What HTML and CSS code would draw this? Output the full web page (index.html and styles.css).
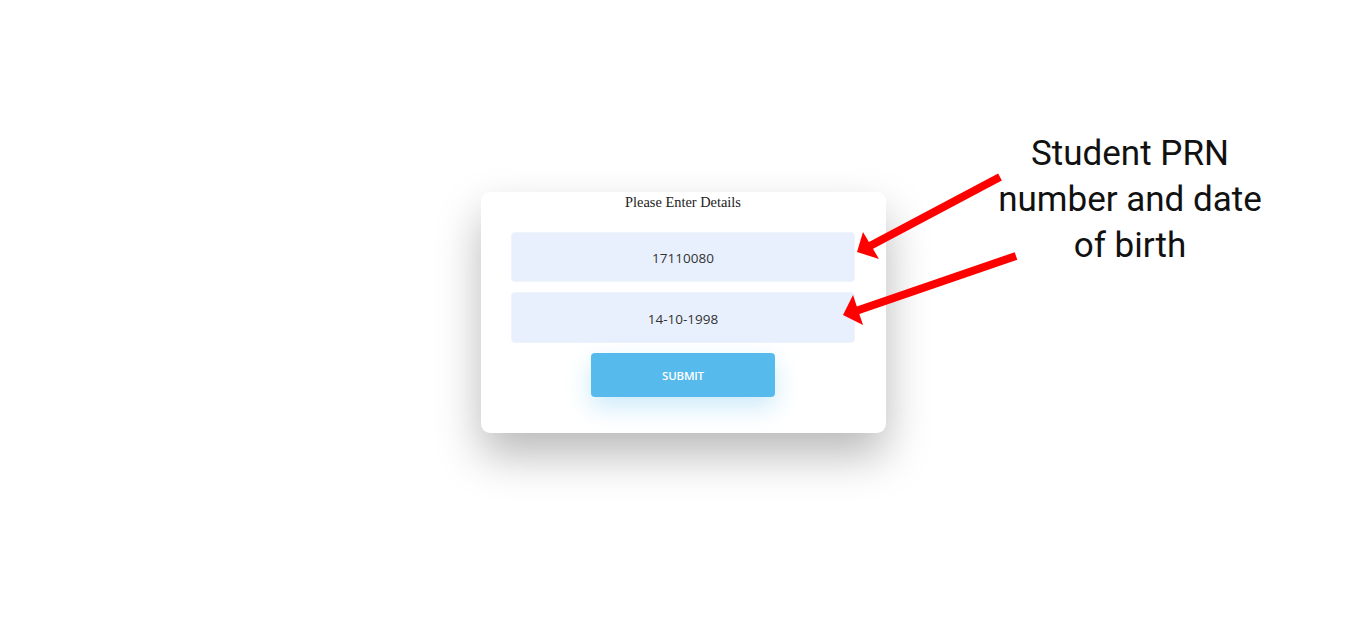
FILE: index.html
```html
<!DOCTYPE html>
<html>
<head>
<meta charset="utf-8">
<link rel="stylesheet" href="styles.css">
</head>
<body>
<main class="page">
  <form class="card">
    <div class="title">Please Enter Details</div>
    <div class="fields">
      <div class="field">17110080</div>
      <div class="field field-tall">14-10-1998</div>
      <button type="button" class="submit">SUBMIT</button>
    </div>
  </form>
</main>
<div class="note">Student PRN<br>number and date<br>of birth</div>
<svg class="arrows" width="1366" height="625" viewBox="0 0 1366 625">
  <line x1="1000" y1="177" x2="868" y2="247" stroke="#ff0000" stroke-width="8"/>
  <polygon points="857,252 863,232 879,259" fill="#ff0000"/>
  <line x1="1016" y1="256" x2="853" y2="312" stroke="#ff0000" stroke-width="8"/>
  <polygon points="843,315 853,295 863,325" fill="#ff0000"/>
</svg>
</body>
</html>
```
FILE: styles.css
```css
html, body {
  margin: 0;
  padding: 0;
  background: #fff;
}
.page {
  min-height: 625px;
  display: flex;
  align-items: center;
  justify-content: center;
}
.card {
  width: 405px;
  height: 241px;
  box-sizing: border-box;
  background: #fff;
  border-radius: 9px;
  box-shadow: 0 22px 45px rgba(0, 0, 0, 0.28);
  display: flex;
  flex-direction: column;
  align-items: center;
  margin: 0;
}
.title {
  font-family: "Liberation Serif", serif;
  font-size: 14.4px;
  color: #222;
  margin-top: 2px;
  line-height: 16px;
}
.fields {
  margin-top: 22px;
  display: flex;
  flex-direction: column;
  align-items: center;
  gap: 10px;
}
.field {
  width: 344px;
  height: 50px;
  box-sizing: border-box;
  padding-top: 2px;
  background: #e8f0fe;
  border: 1px solid #eef3fc;
  border-radius: 4px;
  display: flex;
  align-items: center;
  justify-content: center;
  font-family: "Open Sans", sans-serif;
  font-size: 13.5px;
  color: #333;
}
.field-tall {
  height: 51px;
}
.submit {
  width: 184px;
  height: 44px;
  border: none;
  border-radius: 4px;
  background: #57baed;
  color: #fff;
  font-family: "Open Sans", sans-serif;
  font-size: 11.5px;
  font-weight: 600;
  letter-spacing: -0.2px;
  box-shadow: 0 10px 25px rgba(87, 186, 237, 0.3);
}
.note {
  position: absolute;
  left: 980px;
  top: 131px;
  width: 300px;
  text-align: center;
  font-family: Roboto, sans-serif;
  font-size: 35px;
  line-height: 46px;
  color: #111;
}
.arrows {
  position: absolute;
  left: 0;
  top: 0;
  pointer-events: none;
}
```
